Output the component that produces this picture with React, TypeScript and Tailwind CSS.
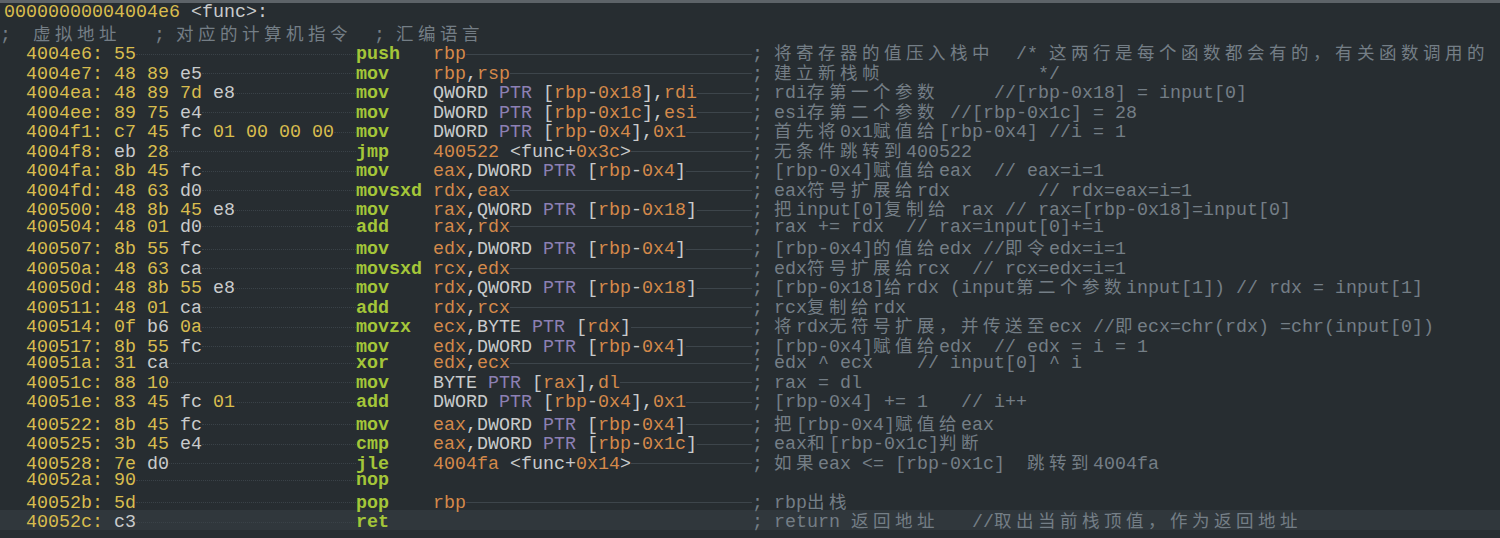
const CW = 11;

type Row = { addr: string; bytes: string; mn: string; ops: string; cm: string };

const rows: Row[] = [
  { addr: '4004e6:', bytes: '55', mn: 'push', ops: 'rbp', cm: '; 将寄存器的值压入栈中  /* 这两行是每个函数都会有的，有关函数调用的' },
  { addr: '4004e7:', bytes: '48 89 e5', mn: 'mov', ops: 'rbp,rsp', cm: '; 建立新栈帧              */' },
  { addr: '4004ea:', bytes: '48 89 7d e8', mn: 'mov', ops: 'QWORD PTR [rbp-0x18],rdi', cm: '; rdi存第一个参数     //[rbp-0x18] = input[0]' },
  { addr: '4004ee:', bytes: '89 75 e4', mn: 'mov', ops: 'DWORD PTR [rbp-0x1c],esi', cm: '; esi存第二个参数 //[rbp-0x1c] = 28' },
  { addr: '4004f1:', bytes: 'c7 45 fc 01 00 00 00', mn: 'mov', ops: 'DWORD PTR [rbp-0x4],0x1', cm: '; 首先将0x1赋值给[rbp-0x4] //i = 1' },
  { addr: '4004f8:', bytes: 'eb 28', mn: 'jmp', ops: '400522 <func+0x3c>', cm: '; 无条件跳转到400522' },
  { addr: '4004fa:', bytes: '8b 45 fc', mn: 'mov', ops: 'eax,DWORD PTR [rbp-0x4]', cm: '; [rbp-0x4]赋值给eax  // eax=i=1' },
  { addr: '4004fd:', bytes: '48 63 d0', mn: 'movsxd', ops: 'rdx,eax', cm: '; eax符号扩展给rdx        // rdx=eax=i=1' },
  { addr: '400500:', bytes: '48 8b 45 e8', mn: 'mov', ops: 'rax,QWORD PTR [rbp-0x18]', cm: '; 把input[0]复制给 rax // rax=[rbp-0x18]=input[0]' },
  { addr: '400504:', bytes: '48 01 d0', mn: 'add', ops: 'rax,rdx', cm: '; rax += rdx  // rax=input[0]+=i' },
  { addr: '400507:', bytes: '8b 55 fc', mn: 'mov', ops: 'edx,DWORD PTR [rbp-0x4]', cm: '; [rbp-0x4]的值给edx //即令edx=i=1' },
  { addr: '40050a:', bytes: '48 63 ca', mn: 'movsxd', ops: 'rcx,edx', cm: '; edx符号扩展给rcx  // rcx=edx=i=1' },
  { addr: '40050d:', bytes: '48 8b 55 e8', mn: 'mov', ops: 'rdx,QWORD PTR [rbp-0x18]', cm: '; [rbp-0x18]给rdx (input第二个参数input[1]) // rdx = input[1]' },
  { addr: '400511:', bytes: '48 01 ca', mn: 'add', ops: 'rdx,rcx', cm: '; rcx复制给rdx' },
  { addr: '400514:', bytes: '0f b6 0a', mn: 'movzx', ops: 'ecx,BYTE PTR [rdx]', cm: '; 将rdx无符号扩展，并传送至ecx //即ecx=chr(rdx) =chr(input[0])' },
  { addr: '400517:', bytes: '8b 55 fc', mn: 'mov', ops: 'edx,DWORD PTR [rbp-0x4]', cm: '; [rbp-0x4]赋值给edx  // edx = i = 1' },
  { addr: '40051a:', bytes: '31 ca', mn: 'xor', ops: 'edx,ecx', cm: '; edx ^ ecx    // input[0] ^ i' },
  { addr: '40051c:', bytes: '88 10', mn: 'mov', ops: 'BYTE PTR [rax],dl', cm: '; rax = dl' },
  { addr: '40051e:', bytes: '83 45 fc 01', mn: 'add', ops: 'DWORD PTR [rbp-0x4],0x1', cm: '; [rbp-0x4] += 1   // i++' },
  { addr: '400522:', bytes: '8b 45 fc', mn: 'mov', ops: 'eax,DWORD PTR [rbp-0x4]', cm: '; 把[rbp-0x4]赋值给eax' },
  { addr: '400525:', bytes: '3b 45 e4', mn: 'cmp', ops: 'eax,DWORD PTR [rbp-0x1c]', cm: '; eax和[rbp-0x1c]判断' },
  { addr: '400528:', bytes: '7e d0', mn: 'jle', ops: '4004fa <func+0x14>', cm: '; 如果eax <= [rbp-0x1c]  跳转到4004fa' },
  { addr: '40052a:', bytes: '90', mn: 'nop', ops: '', cm: '' },
  { addr: '40052b:', bytes: '5d', mn: 'pop', ops: 'rbp', cm: '; rbp出栈' },
  { addr: '40052c:', bytes: 'c3', mn: 'ret', ops: '', cm: '; return 返回地址   //取出当前栈顶值，作为返回地址' },
];

const REG = /^(rbp|rsp|rdi|esi|eax|rdx|rax|edx|rcx|ecx|dl)$/;
const CJK = /[\u3000-\u9fff\uff00-\uffef]/;

function Ops({ text }: { text: string }) {
  const parts = text.split(/([A-Za-z0-9]+)/).filter((p) => p !== '');
  return (
    <>
      {parts.map((p, i) => {
        let c = 'text-[#c9cbcc]';
        if (REG.test(p) || /^0x/.test(p) || /^[0-9][0-9a-f]*$/.test(p)) c = 'text-[#d4894a]';
        else if (p === 'PTR') c = 'text-[#8c80b4]';
        return (
          <span key={i} className={c}>
            {p}
          </span>
        );
      })}
    </>
  );
}

function Comment({ text }: { text: string }) {
  const parts = text.split(/([\u3000-\u9fff\uff00-\uffef]+)/).filter((p) => p !== '');
  return (
    <span className="text-[#747e86]">
      {parts.map((p, i) =>
        CJK.test(p) ? (
          <span key={i} className="font-[Noto_Sans_CJK_SC] text-[17.5px] tracking-[4.5px]">
            {p}
          </span>
        ) : (
          <span key={i}>{p}</span>
        )
      )}
    </span>
  );
}

function Gap({ n, kind }: { n: number; kind: 'dot' | 'line' | 'none' }) {
  const w = Math.max(n, 1) * CW;
  return (
    <span
      className={
        'inline-block align-middle h-[1px] ' +
        (kind === 'line' ? 'bg-[#3d454b]' : kind === 'dot' ? 'border-t border-dotted border-[#3a4248]' : '')
      }
      style={{ width: w }}
    />
  );
}

function Line({ r, last }: { r: Row; last: boolean }) {
  const left = 2 + r.addr.length + 1 + r.bytes.length;
  const opsLen = r.ops.length;
  return (
    <div className={'h-[19.5px] whitespace-pre ' + (last ? 'bg-[#30373c] -ml-[4px] pl-[4px]' : '')}>
      <span>  </span>
      <span className="text-[#d8bc4e]">{r.addr} </span>
      {r.bytes.split(' ').map((b, i) => (
        <span key={i} className={/^[0-9]/.test(b) || b === 'c7' ? 'text-[#d8bc4e]' : 'text-[#c9cbcc]'}>
          {(i ? ' ' : '') + b}
        </span>
      ))}
      <Gap n={32 - left} kind="dot" />
      <span className="text-[#a4c639] font-bold">{r.mn}</span>
      <span>{' '.repeat(7 - r.mn.length)}</span>
      <Ops text={r.ops} />
      {r.cm && (
        <>
          <Gap n={68 - 39 - opsLen} kind={opsLen ? 'line' : 'none'} />
          <Comment text={r.cm} />
        </>
      )}
    </div>
  );
}

export default function App() {
  return (
    <div className="w-[1500px] h-[538px] bg-[#272d31] border-t-[3px] border-[#5d6368] overflow-hidden font-[Liberation_Mono] text-[18.33px] leading-[19.5px] pl-[4px]">
      <div className="h-[19.5px] whitespace-pre">
        <span className="text-[#d8bc4e]">00000000004004e6</span>
        <span className="text-[#c9cbcc]"> &lt;func&gt;:</span>
      </div>
      <div className="h-[19.5px] whitespace-pre -ml-[4px]">
        <Comment text=";  虚拟地址   ; 对应的计算机指令  ; 汇编语言" />
      </div>
      {rows.map((r, i) => (
        <Line key={i} r={r} last={i === rows.length - 1} />
      ))}
    </div>
  );
}
